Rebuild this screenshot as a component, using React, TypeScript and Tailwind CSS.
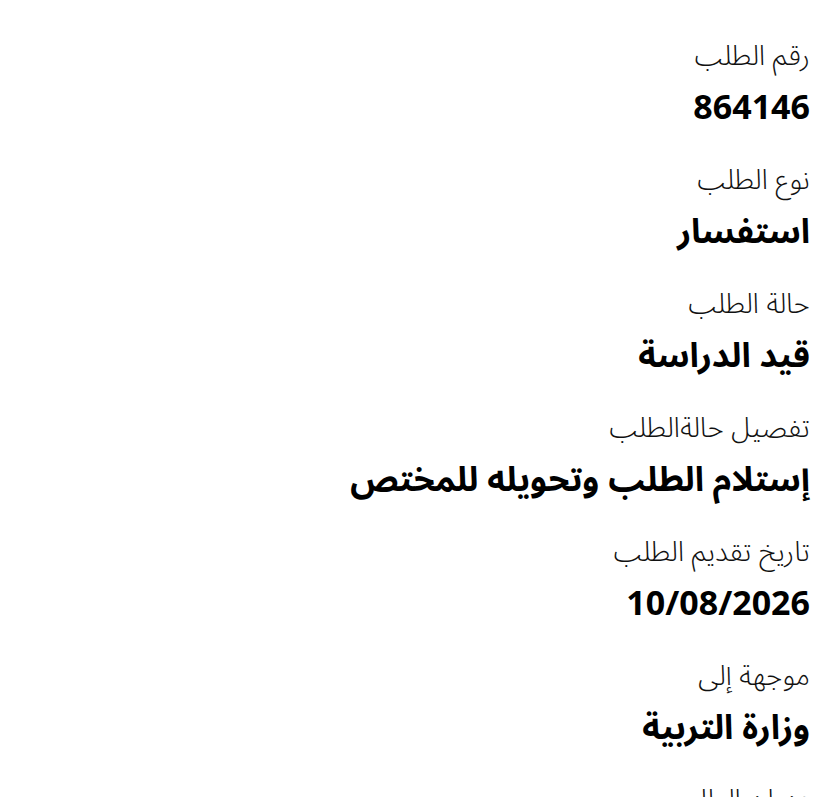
import React from 'react';

const fields = [
  { label: 'رقم الطلب', value: '864146' },
  { label: 'نوع الطلب', value: 'استفسار' },
  { label: 'حالة الطلب', value: 'قيد الدراسة' },
  { label: 'تفصيل حالةالطلب', value: 'إستلام الطلب وتحويله للمختص' },
  { label: 'تاريخ تقديم الطلب', value: '10/08/2026' },
  { label: 'موجهة إلى', value: 'وزارة التربية' },
  { label: 'عنوان الطلب', value: 'استفسار عن الطلب' },
];

export default function App() {
  return (
    <div
      dir="rtl"
      className="min-h-screen bg-white text-black pt-[35px] pr-[18px] pl-4"
      style={{ fontFamily: '"Noto Sans Arabic", "Noto Sans", "DejaVu Sans", sans-serif' }}
    >
      <div className="flex flex-col gap-[27px]">
        {fields.map((f) => (
          <div key={f.label} className="flex flex-col gap-[5px]">
            <div className="text-[28px] leading-[44px] font-light text-[#111]">{f.label}</div>
            <div className="text-[34px] leading-[48px] font-bold">{f.value}</div>
          </div>
        ))}
      </div>
    </div>
  );
}
